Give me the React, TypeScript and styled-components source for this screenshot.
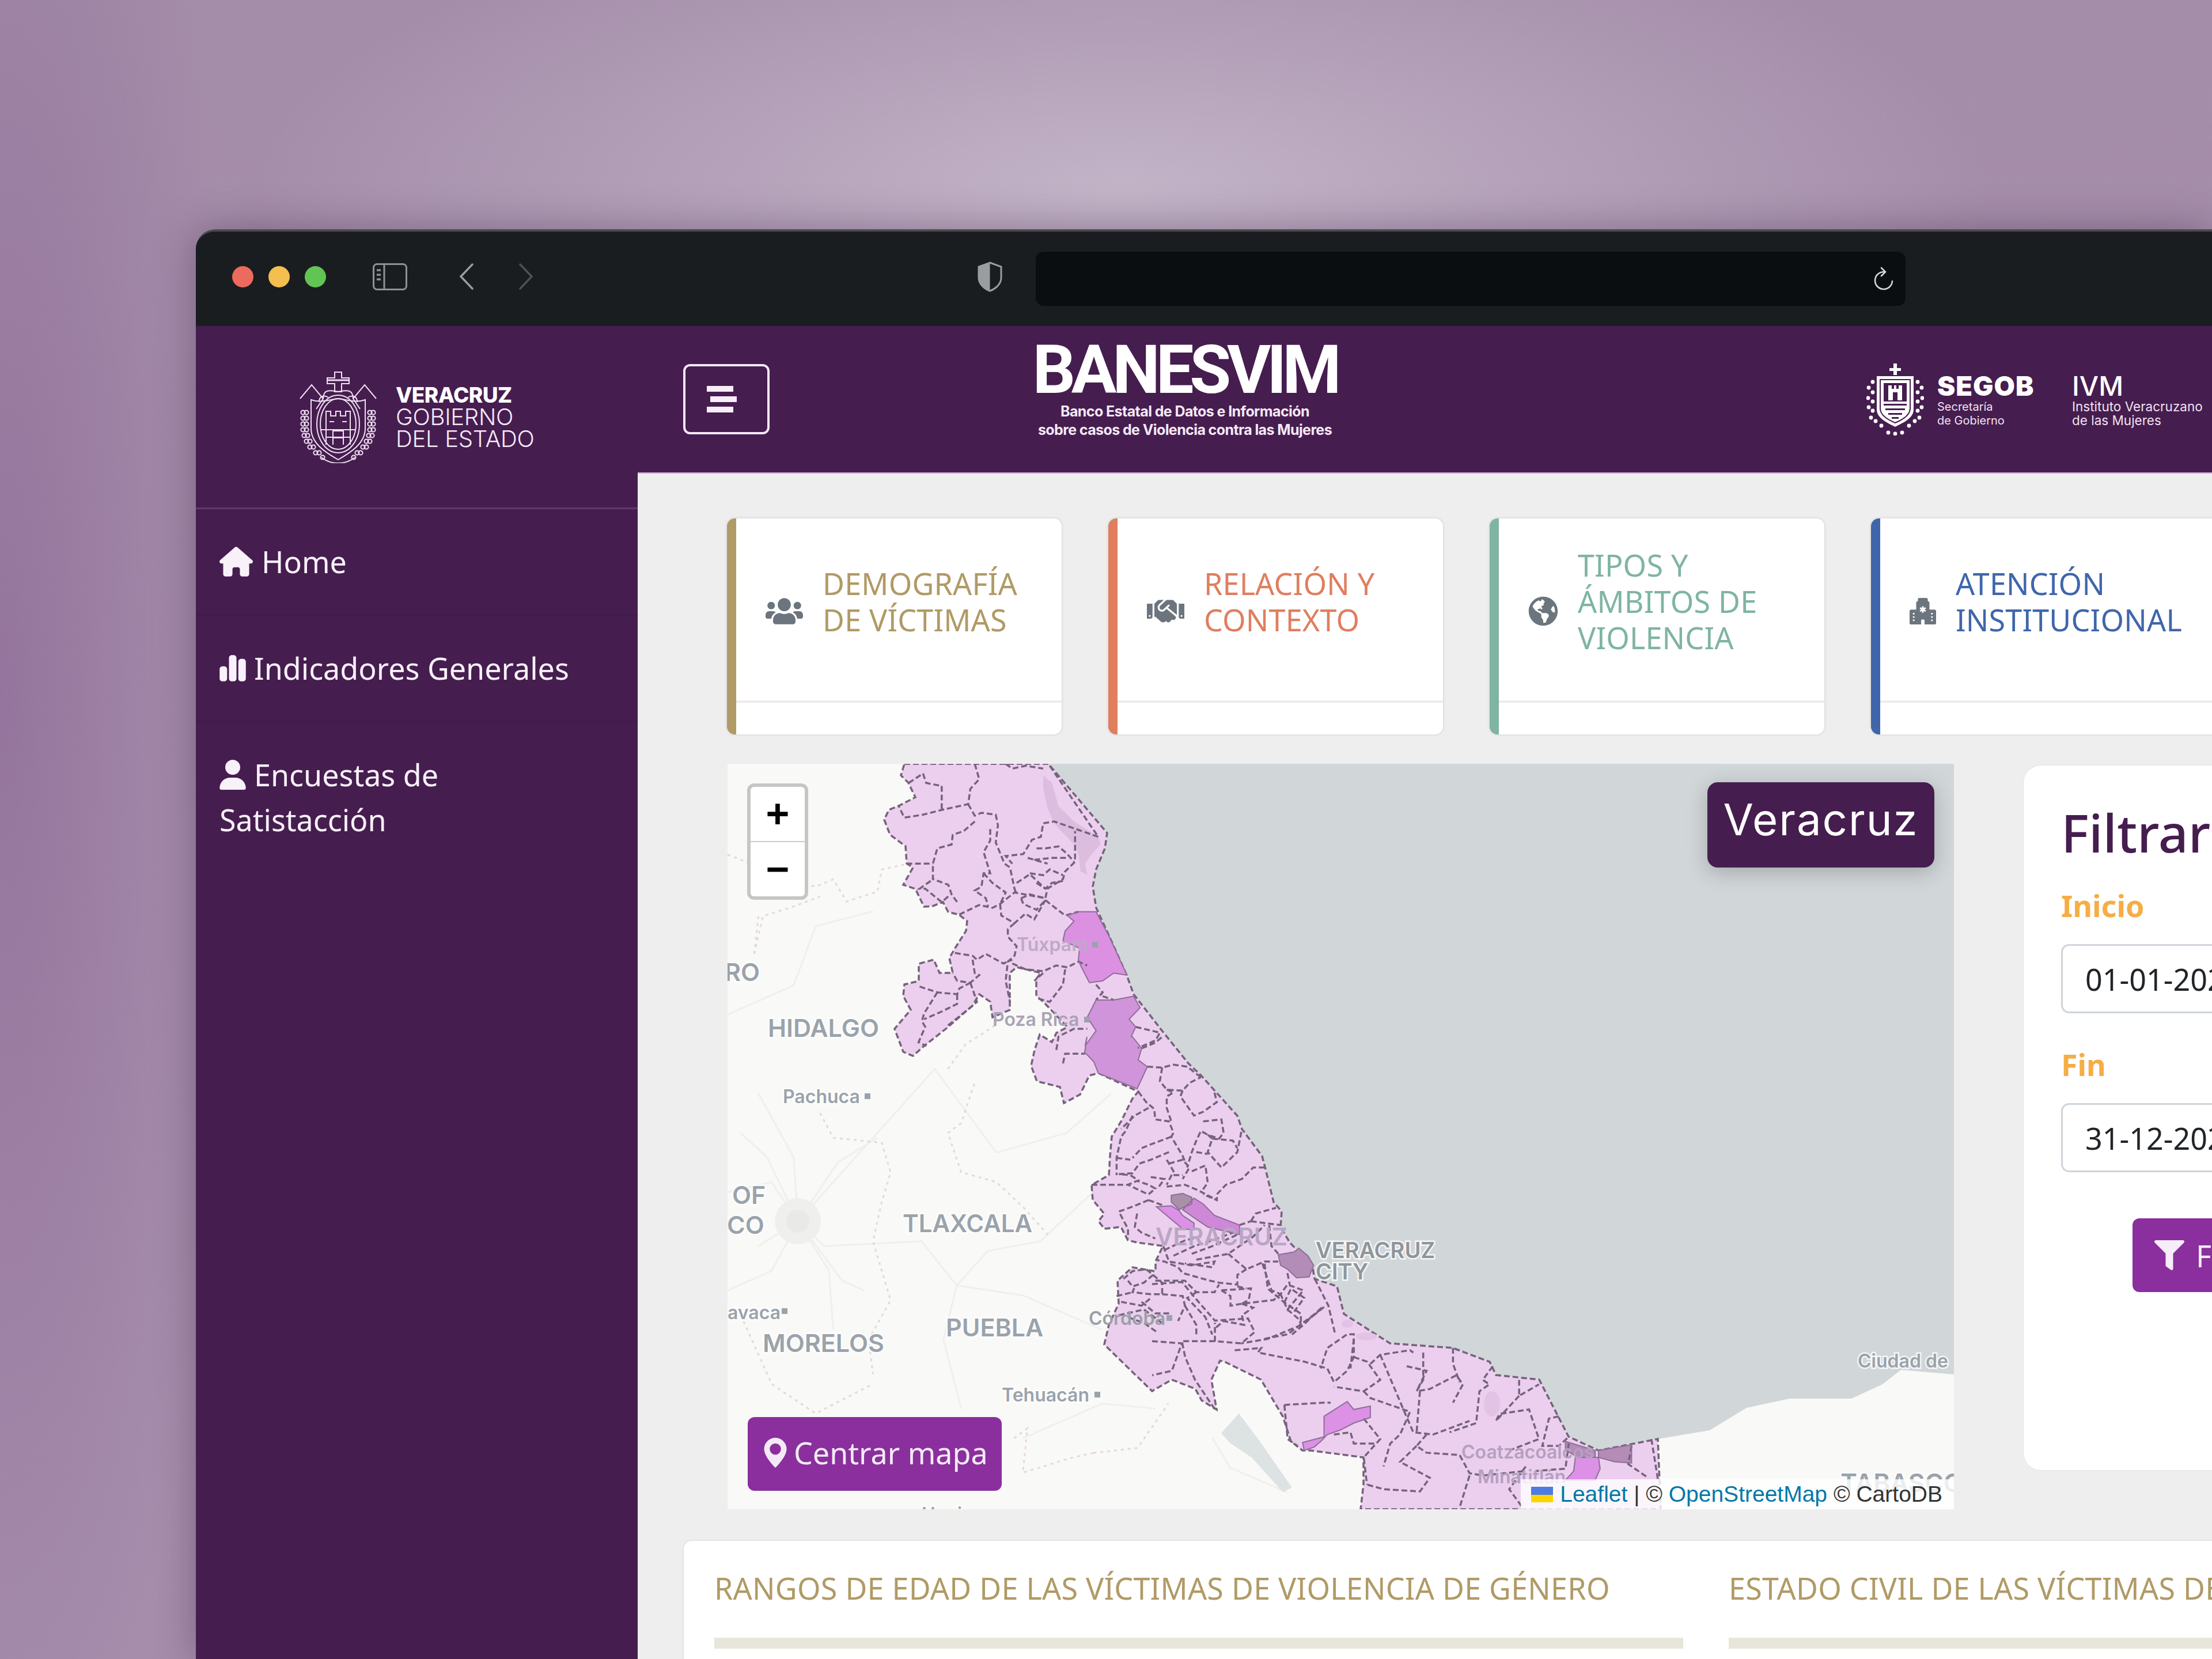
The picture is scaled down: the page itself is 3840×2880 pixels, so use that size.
import styled, { createGlobalStyle } from 'styled-components';
import { FaUsers, FaFilter, FaHandshake, FaGlobeAmericas } from 'react-icons/fa';
import { FaHouse, FaChartSimple, FaUser } from 'react-icons/fa6';
import { BsGeoAltFill, BsHospitalFill } from 'react-icons/bs';

const GlobalStyle = createGlobalStyle`
  html, body {
    margin: 0;
    width: 3840px;
    height: 2880px;
    overflow: hidden;
    font-family: "Noto Sans", "Open Sans", sans-serif;
  }
`;

const PURPLE = '#461d4f';
const ACCENT = '#8a2f9d';

const Backdrop = styled.div`
  width: 3840px;
  height: 2880px;
  overflow: hidden;
  padding: 398px 0 0 340px;
  box-sizing: border-box;
  background:
    radial-gradient(ellipse 1500px 520px at 1950px 330px, #c3b4c8 0%, rgba(190, 173, 197, 0) 100%),
    radial-gradient(ellipse 420px 2000px at 0px 1200px, #94749c 0%, rgba(148, 116, 156, 0) 100%),
    linear-gradient(180deg, #a48da9 0%, #a88fae 50%, #a68dac 100%);
`;

const Win = styled.div`
  width: 3500px;
  height: 2482px;
  border-radius: 34px 0 0 0;
  overflow: hidden;
  border-top: 4px solid #4d4a50;
  box-shadow: 0 0 70px rgba(40, 20, 50, 0.35);
  background: ${PURPLE};
`;

const TitleBar = styled.div`
  height: 164px;
  background: #1a1d20;
  display: flex;
  align-items: center;
  padding-left: 63px;
`;

const Light = styled.span<{ $c: string }>`
  width: 37px;
  height: 37px;
  border-radius: 50%;
  margin: 0 26px 8px 0;
  background: ${(p) => p.$c};
`;

const ToolIcon = styled.svg<{ $ml: number }>`
  margin: 0 0 8px ${(p) => p.$ml}px;
  flex: none;
`;

const UrlBar = styled.div`
  margin-left: 57px;
  width: 1510px;
  height: 94px;
  background: #0b0e10;
  border-radius: 14px;
  display: flex;
  align-items: center;
  justify-content: flex-end;
  padding-right: 20px;
  box-sizing: border-box;
`;

const Body = styled.div`
  display: flex;
`;

const Sidebar = styled.aside`
  width: 767px;
  flex: none;
`;

const Brand = styled.div`
  height: 318px;
  box-sizing: border-box;
  border-bottom: 3px solid #5f3a6b;
  display: flex;
  align-items: center;
  padding-left: 178px;
  gap: 31px;
  color: #f4e9f6;
`;

const BrandText = styled.div`
  font-family: Inter, "Liberation Sans", sans-serif;
  font-size: 40px;
  line-height: 38px;
  font-weight: 300;
  letter-spacing: -0.3px;
  b {
    display: block;
    font-size: 37px;
    font-weight: 800;
    letter-spacing: -0.6px;
    color: #fff;
  }
`;

const NavItem = styled.a`
  display: block;
  padding: 52px 41px;
  font-size: 52px;
  line-height: 78px;
  color: #f8f1fa;
  border-bottom: 3px solid #42194b;
  &:last-child {
    border-bottom: 0;
  }
`;

const IconSlot = styled.span<{ $w: number; $h?: number; $mr?: number }>`
  display: inline-block;
  width: ${(p) => p.$w}px;
  height: ${(p) => p.$h ?? 52}px;
  margin-right: ${(p) => p.$mr ?? 15}px;
  vertical-align: -6px;
  flex: none;
  svg {
    display: block;
    width: 100%;
    height: 100%;
  }
`;

const Column = styled.div`
  flex: 1;
  min-width: 0;
`;

const Header = styled.header`
  height: 256px;
  box-sizing: border-box;
  border-bottom: 2px solid #c7a6cc;
  display: flex;
  align-items: center;
  padding-left: 79px;
  color: #fff;
`;

const MenuButton = styled.button`
  width: 150px;
  height: 122px;
  background: transparent;
  border: 4px solid #f5e9f7;
  border-radius: 12px;
  display: flex;
  flex-direction: column;
  align-items: flex-start;
  justify-content: center;
  gap: 8px;
  padding: 0 0 0 37px;
  flex: none;
`;

const MenuBar = styled.span<{ $shift?: boolean }>`
  display: block;
  width: 46px;
  height: 10px;
  background: #f7eefa;
  margin-left: ${(p) => (p.$shift ? 6 : 0)}px;
`;

const Banner = styled.div`
  margin-left: 455px;
  width: 532px;
  flex: none;
  text-align: center;
  transform: translateY(-18px);
`;

const BannerTitle = styled.div`
  font-family: Roboto, "Liberation Sans", sans-serif;
  font-weight: 700;
  font-size: 117px;
  line-height: 108px;
  letter-spacing: -7.2px;
  white-space: nowrap;
`;

const BannerSub = styled.div`
  font-family: Inter, sans-serif;
  font-weight: 700;
  font-size: 25px;
  line-height: 32px;
  margin-top: 2px;
  letter-spacing: -0.6px;
  white-space: nowrap;
  color: #f5eaf7;
`;

const SegobGroup = styled.div`
  margin-left: 917px;
  display: flex;
  align-items: center;
  flex: none;
`;

const LogoText = styled.div<{ $ml: number; $w: number; $small: number; $heavy?: boolean }>`
  margin-left: ${(p) => p.$ml}px;
  width: ${(p) => p.$w}px;
  font-family: Inter, sans-serif;
  font-size: ${(p) => p.$small}px;
  line-height: 24px;
  font-weight: 400;
  color: #efe3f2;
  white-space: nowrap;
  b {
    display: block;
    font-size: 47px;
    line-height: 50px;
    margin-bottom: -1px;
    color: #fff;
    font-weight: ${(p) => (p.$heavy ? 900 : 500)};
    letter-spacing: ${(p) => (p.$heavy ? '1px' : '0')};
  }
`;

const Main = styled.main`
  background: #eee;
  height: 2100px;
  overflow: hidden;
`;

const CardRow = styled.div`
  display: flex;
  gap: 81px;
  padding: 78px 0 0 155px;
`;

const Card = styled.div<{ $c: string }>`
  width: 581px;
  height: 375px;
  flex: none;
  box-sizing: border-box;
  background: #fff;
  border-left: 16px solid ${(p) => p.$c};
  border-radius: 14px;
  box-shadow: 0 0 5px rgba(0, 0, 0, 0.14);
  color: ${(p) => p.$c};
  display: flex;
  flex-direction: column;
  &:last-child {
    width: 620px;
  }
`;

const CardBody = styled.div`
  flex: 1;
  display: flex;
  align-items: center;
  padding: 0 0 29px 51px;
`;

const CardIcon = styled(IconSlot)`
  color: #6c757d;
  margin-top: 34px;
  margin-right: 34px;
`;

const CardTitle = styled.div`
  font-size: 52px;
  line-height: 63px;
  font-weight: 400;
  letter-spacing: 0.2px;
`;

const CardFoot = styled.div`
  height: 55px;
  border-top: 4px solid #eeece9;
`;

const MapRow = styled.div`
  display: flex;
  gap: 121px;
  align-items: flex-start;
  padding: 51px 0 0 156px;
`;

const MapBox = styled.div`
  position: relative;
  width: 2129px;
  height: 1294px;
  flex: none;
  overflow: hidden;
  background: #f9f9f7;
`;

const MapSvg = styled.svg`
  display: block;
  width: 100%;
  height: 100%;
`;

const MapLabel = styled.text<{ $size: number; $c: string; $halo?: boolean }>`
  font-family: Inter, "Liberation Sans", sans-serif;
  font-weight: 600;
  font-size: ${(p) => p.$size}px;
  fill: ${(p) => p.$c};
  stroke: ${(p) => (p.$halo ? 'rgba(255,255,255,0.8)' : 'none')};
  stroke-width: 5px;
  paint-order: stroke;
`;

const ZoomControl = styled.div`
  position: absolute;
  left: 34px;
  top: 34px;
  width: 106px;
  height: 202px;
  box-sizing: border-box;
  border: 6px solid #c6c6c6;
  border-radius: 12px;
  background: #fff;
  display: flex;
  flex-direction: column;
`;

const ZoomBtn = styled.span`
  flex: 1;
  display: flex;
  align-items: center;
  justify-content: center;
  font-family: "Liberation Sans", sans-serif;
  font-weight: 700;
  font-size: 70px;
  line-height: 1;
  color: #000;
  & + & {
    border-top: 2px solid #ccc;
  }
`;

const StateTag = styled.div`
  position: absolute;
  right: 34px;
  top: 32px;
  width: 394px;
  height: 148px;
  box-sizing: border-box;
  padding-bottom: 20px;
  background: ${PURPLE};
  color: #fff;
  border-radius: 18px;
  box-shadow: 0 8px 36px rgba(0, 0, 0, 0.22);
  display: flex;
  align-items: center;
  justify-content: center;
  font-family: Inter, sans-serif;
  font-size: 76px;
  letter-spacing: 2px;
  font-weight: 400;
`;

const CenterBtn = styled.button`
  position: absolute;
  left: 35px;
  bottom: 32px;
  width: 441px;
  height: 128px;
  box-sizing: border-box;
  border: 0;
  padding: 0 0 5px 22px;
  background: ${ACCENT};
  color: #f4eaf6;
  border-radius: 12px;
  font-family: "Noto Sans", sans-serif;
  font-size: 52px;
  display: flex;
  align-items: center;
  white-space: nowrap;
`;

const Attribution = styled.div`
  position: absolute;
  right: 0;
  bottom: 0;
  height: 52px;
  box-sizing: border-box;
  padding: 0 20px 0 18px;
  background: rgba(255, 255, 255, 0.8);
  font-family: "Liberation Sans", Arial, sans-serif;
  font-size: 39px;
  line-height: 52px;
  color: #333;
  white-space: nowrap;
  display: flex;
  align-items: center;
  a {
    color: #0078a8;
  }
  svg {
    margin-right: 12px;
  }
  span {
    white-space: pre;
  }
`;

const FilterCard = styled.section`
  margin-top: 3px;
  width: 900px;
  height: 1223px;
  flex: none;
  box-sizing: border-box;
  background: #fff;
  border-radius: 30px;
  box-shadow: 0 0 3px rgba(0, 0, 0, 0.08);
  padding: 62px 0 0 65px;
`;

const FilterTitle = styled.h2`
  margin: 0;
  font-size: 91px;
  line-height: 109px;
  font-weight: 500;
  color: ${PURPLE};
`;

const FieldLabel = styled.label<{ $mt: number }>`
  display: block;
  margin-top: ${(p) => p.$mt}px;
  font-size: 52px;
  line-height: 78px;
  font-weight: 700;
  color: #f6ad45;
`;

const DateInput = styled.div`
  margin-top: 28px;
  width: 800px;
  height: 120px;
  box-sizing: border-box;
  border: 3px solid #ced4da;
  border-radius: 14px;
  padding-left: 39px;
  display: flex;
  align-items: center;
  font-size: 52px;
  color: #212529;
`;

const FilterBtn = styled.button`
  margin: 80px 0 0 124px;
  width: 400px;
  height: 128px;
  border: 0;
  border-radius: 12px;
  padding: 0 0 0 38px;
  background: ${ACCENT};
  color: #f6edf8;
  font-family: "Noto Sans", sans-serif;
  font-size: 52px;
  display: flex;
  align-items: center;
`;

const ChartsCard = styled.section`
  margin: 55px 0 0 80px;
  height: 400px;
  background: #fff;
  border-radius: 14px 0 0 0;
  box-shadow: 0 0 4px rgba(0, 0, 0, 0.12);
  padding: 50px 0 0 53px;
  display: flex;
  gap: 79px;
`;

const ChartCol = styled.div`
  width: 1682px;
  flex: none;
`;

const ChartTitle = styled.div`
  font-size: 52px;
  line-height: 63px;
  letter-spacing: 0.25px;
  color: #b09a66;
  white-space: nowrap;
`;

const ChartBar = styled.div`
  margin-top: 55px;
  height: 19px;
  background: #e8e5da;
`;

type Pt = [number, number];

const fromZoom = (ox: number, oy: number, sx: number, sy: number) => (s: string): Pt[] =>
  s
    .trim()
    .split(/\s+/)
    .map((p) => {
      const [x, y] = p.split(',').map(Number);
      return [ox + x / sx, oy + y / sy] as Pt;
    });

// coordinates read off the zoomed crops of the reference
const A = fromZoom(1520, 1326, 2.613, 3);
const B = fromZoom(1800, 1800, 2.529, 3);
const C = fromZoom(2000, 2000, 1.742, 2.529);
const D = fromZoom(1240, 1300, 1.3067, 1.17);

const pts = (list: Pt[]) => list.map(([x, y]) => `${x.toFixed(1)},${y.toFixed(1)}`).join(' ');

const STATE =
  '1570,1326 1820,1326 1922,1446 1918,1473 1903,1509 1897,1539 1903,1576 1926,1626 1956,1693 1968,1726 2017,1789 2063,1846 2085,1867 2148,1937 2156,1960 2191,2007 2197,2030 2211,2087 2225,2103 2223,2130 2239,2157 2278,2197 2282,2220 2321,2233 2333,2281 2413,2332 2522,2340 2586,2364 2597,2387 2672,2395 2723,2494 2775,2518 2878,2498 2883,2620 2362,2620 2367,2577 2367,2530 2275,2518 2261,2518 2241,2502 2227,2459 2189,2395 2126,2364 2118,2362 2103,2395 2112,2447 2086,2431 2075,2411 2034,2395 2000,2415 1917,2334 1925,2300 1942,2263 1940,2223 1966,2200 2006,2207 2006,2190 2019,2163 1974,2157 1958,2153 1946,2130 1917,2133 1907,2120 1917,2107 1897,2083 1895,2057 1925,2040 1927,2007 1930,1973 1946,1947 1966,1907 1976,1895 1907,1863 1891,1867 1875,1900 1847,1915 1840,1887 1800,1877 1790,1850 1796,1823 1805,1796 1826,1809 1834,1793 1853,1783 1811,1739 1799,1729 1799,1699 1807,1689 1765,1679 1753,1689 1753,1753 1723,1766 1719,1739 1700,1726 1688,1746 1642,1786 1604,1816 1585,1833 1568,1826 1553,1786 1581,1753 1568,1729 1570,1709 1595,1703 1595,1673 1621,1666 1631,1689 1654,1689 1648,1663 1658,1646 1677,1616 1679,1599 1665,1588 1646,1583 1637,1566 1619,1573 1604,1574 1589,1543 1568,1536 1585,1506 1574,1499 1572,1469 1545,1449 1535,1423 1543,1406 1562,1398 1589,1384 1577,1359 1564,1346';

const SEA =
  '1820,1326 3392,1326 3392,2386 3300,2378 3268,2403 3214,2428 3107,2428 3032,2444 2968,2483 2878,2498 2775,2518 2723,2494 2672,2395 2597,2387 2586,2364 2522,2340 2413,2332 2333,2281 2321,2233 2282,2220 2278,2197 2239,2157 2223,2130 2225,2103 2211,2087 2197,2030 2191,2007 2156,1960 2148,1937 2085,1867 2063,1846 2017,1789 1968,1726 1956,1693 1926,1626 1903,1576 1897,1539 1903,1509 1918,1473 1922,1446';

const BORDERS: Pt[][] = [
  ...[
    '450,0 470,80 430,130 420,210 300,240 215,265 130,280 105,220',
    '150,100 215,50 230,100 300,115 300,240',
    '420,210 450,270 480,255 545,265 555,320 545,410 585,520 610,540 630,650 640,680',
    '450,300 400,350 350,370 345,420 280,440 260,520 260,600 330,630 345,680 370,720',
    '140,520 240,520 260,520',
    '250,610 200,650 225,650 300,720 340,680',
    '380,785 470,735 530,750 565,730 630,670 770,700',
    '520,340 520,400 490,460 520,570 490,570 480,640 450,660 500,700 510,740',
    '490,570 530,620 590,670 565,730',
    '565,730 570,790 630,830 680,780 720,810 770,710',
    '630,830 600,860 600,900 640,950 630,1000 600,1030 590,1130 610,1240',
    '770,710 860,790 920,770',
    '660,700 700,680 770,700 780,650 850,600 860,560 905,510 905,350',
    '1010,380 810,300 760,310 750,380 710,395 670,470 590,480 620,520',
    '790,10 1010,380',
    '730,440 770,440 830,430 870,470 900,510',
    '690,490 780,520',
    '720,500 800,490 870,490',
    '700,570 760,580 790,550 850,580',
    '730,620 770,650 800,620 850,610',
    '640,620 700,575 770,650',
    '660,700 670,730 730,760 770,710',
    '620,1040 680,1070 760,1080 820,1050 870,1060 920,1030 960,1050',
    '360,985 440,1000 460,1020 500,990 580,1040 620,1020',
    '440,1020 450,1090 470,1100 430,1140 370,1130 350,1090',
    '430,1140 460,1240 440,1260 320,1370',
    '200,1160 280,1190 370,1200 380,1170 430,1140',
    '280,1190 220,1300 210,1340 225,1370 195,1450 230,1470',
    '370,1200 370,1250 300,1290 220,1330',
    '760,1090 720,1130',
    '860,1070 850,1150 790,1240 730,1220',
    '1000,1150 1030,1190 1000,1230',
    '1030,1210 1080,1230',
    '820,1490 830,1420 900,1380 960,1380',
    '850,1560 860,1510 950,1510',
    '590,0 620,25 680,10 760,25',
    '1180,1370 1290,1400 1270,1440 1190,1480',
  ].map(A),
  ...[
    '460,60 520,30 550,0',
    '485,155 550,160 600,145 660,155 720,210',
    '550,160 540,230 570,275 640,280 670,240 720,210',
    '640,280 630,310 690,410 730,390 790,340 780,290',
    '445,285 480,340 515,375 520,430 580,440 600,500 590,520 640,620 650,650',
    '570,275 600,290 570,310 570,370 590,440',
    '490,370 430,410 370,480',
    '420,410 390,490 370,520 350,630 350,720',
    '590,520 500,560 460,580 420,630',
    '350,630 410,640',
    '580,600 500,640 450,660 420,710 360,715 410,720 450,750',
    '730,440 810,430 820,500 800,530 750,510 720,490 700,540 680,600 660,680',
    '750,510 770,530 750,600 810,680 880,600 900,480',
    '770,530 860,540 880,580',
    '700,600 750,610',
    '1000,680 950,680 900,740 830,770 790,820 790,850 730,820',
    '240,770 330,770 400,770 440,750 490,770 520,790 490,820 470,810 400,770',
    '490,850 430,880 360,910 400,1000 400,1050',
    '490,850 560,880',
    '440,920 430,990 460,1020 520,1050',
    '570,640 600,700 570,770',
    '580,660 640,640 670,680 640,740',
    '600,720 640,720',
    '680,700 740,670 750,760 720,810',
    '570,780 650,770 710,800 790,850',
    '500,730 560,740 530,790',
    '940,960 960,920 1050,890',
    '940,960 1000,970 1070,980',
    '890,980 940,960',
    '1020,980 1030,1090 1060,1130',
    '560,1110 650,1060 720,1040',
    '600,1140 690,1090 770,1060 860,1020',
    '680,1130 770,1090 880,1030',
    '700,1160 840,1130 950,1040 1000,980',
    '555,1090 580,1170 680,1190 780,1170 770,1200 650,1180',
    '840,1130 920,1210 1000,1170 1060,1170',
    '920,1210 880,1240 880,1290 800,1280 760,1270 640,1230 620,1200 560,1170 520,1160',
    '990,1180 1030,1320 1070,1340 1100,1290 1170,1320 1100,1420 1070,1340',
    '1100,1230 1110,1290',
    '810,1320 940,1310 930,1370 900,1390 1040,1370 1070,1340',
    '810,1320 850,1350 850,1400 900,1390',
    '880,1300 920,1310',
    '520,1270 650,1270 700,1330 780,1330 800,1290',
    '700,1330 660,1360 740,1460 770,1550',
    '900,1390 950,1410 900,1450 910,1500 820,1480 780,1520',
    '1250,1410 1170,1500 1120,1550',
    '1100,1420 1150,1470 1160,1500',
    '1220,1260 1280,1400 1310,1550',
    '380,1260 420,1220 480,1210 510,1240 470,1280 420,1300 400,1270',
    '510,1240 550,1280 550,1340 500,1340 420,1330 430,1300',
    '350,1350 420,1330',
    '370,1380 460,1400 500,1360',
    '460,1380 520,1440 590,1440',
    '550,1340 640,1350 650,1400 620,1480',
    '400,1460 470,1490 530,1540',
    '360,1450 470,1420 560,1500',
    '650,1400 700,1500 700,1560',
  ].map(B),
  ...[
    '0,580 90,570 130,640 190,740 290,730 310,790 270,840 190,830 190,750',
    '340,490 350,600 400,660 450,710 450,760 350,820 270,840',
    '520,680 460,750',
    '400,660 420,600 460,640 430,700',
    '190,830 90,830 100,900 130,1000 190,1130',
    '0,830 90,840 60,960 0,980',
    '250,870 330,860 320,880 460,920 530,950 550,1010 590,960 610,900 610,800 590,800 530,860 510,950',
    '340,820 410,800 520,680',
    '610,820 600,950',
    '610,900 650,920 690,1000 640,1050 550,1030',
    '660,930 690,890 780,870 790,880',
    '820,880 820,1000 800,1050 840,1040 920,980 940,1020 910,1100',
    '910,860 910,930 930,1010',
    '1030,940 1000,1000 1020,1020 990,1050 980,1190 900,1230',
    '690,890 760,1130 790,1230 850,1240 960,1180',
    '770,940 830,960 800,1050',
    '810,1050 800,1230',
    '640,1050 660,1080 780,1140 750,1240 720,1280 700,1380',
    '1110,1000 1110,1070 1170,1020',
    '1110,1070 1040,1180 1050,1150 1140,1130 1170,1260 1080,1310',
    '400,1110 520,1100 540,1100',
    '400,1110 410,1260 440,1290',
    '550,1240 600,1230 610,1280 680,1280',
    '640,1170 690,1260 640,1340 650,1460',
    '830,1240 800,1290 830,1320 930,1330 960,1410 1000,1420 1130,1400',
    '800,1290 750,1360 840,1430 810,1490 700,1480 650,1460',
    '1230,1160 1200,1170 1180,1290 1230,1290 1260,1250',
    '1260,1280 1250,1390 1160,1400',
    '960,1420 930,1560',
    '1130,1380 1080,1480 1120,1560',
    '1510,1260 1530,1440',
    '1450,1290 1440,1370 1500,1430',
  ].map(C),
];

const HIGHLIGHTS: { fill: string; points: Pt[] }[] = [
  {
    fill: '#dc90e2',
    points: A('870,790 920,770 1000,770 1060,900 1140,1100 1080,1090 1030,1130 970,1140 930,1050 920,1020 925,960 850,920 860,870 900,820'),
  },
  {
    fill: '#cf94d9',
    points: [
      ...A('1000,1230 1080,1230 1170,1210 1200,1270 1150,1330 1180,1370 1160,1420'),
      ...B('420,0 460,60 445,120 485,155 460,220 440,270 270,190 250,130 210,80 220,0'),
      ...A('950,1470 1000,1390 960,1320'),
    ],
  },
  { fill: '#a890a8', points: B('590,825 640,815 680,835 680,870 640,890 625,900 590,860') },
  { fill: '#cf88d8', points: B('640,900 690,840 730,870 780,930 890,980 890,1030 820,1010 750,990 700,950') },
  { fill: '#dc90e6', points: B('525,885 590,880 625,905 640,930 690,970 690,1005 640,1000 590,950') },
  { fill: '#b48cb8', points: B('1060,1135 1130,1120 1150,1100 1190,1140 1215,1190 1195,1250 1140,1255 1100,1210 1070,1190') },
  {
    fill: '#dc90e6',
    points: C('520,1160 590,1095 610,1130 660,1115 660,1165 610,1190 570,1220 530,1240 510,1270 490,1295 460,1310 455,1275 520,1250'),
  },
  { fill: '#b58bb8', points: C('1350,1310 1450,1285 1450,1365 1400,1360 1350,1340') },
  { fill: '#b58bb8', points: C('1250,1270 1340,1310 1340,1340 1290,1340 1250,1310') },
  { fill: '#dc90e6', points: C('1280,1340 1350,1340 1355,1390 1340,1440 1250,1440 1275,1400') },
];

const ROADS = [
  '100,700 180,830 190,960 290,1080 340,1100',
  '190,960 350,800 500,650 640,820',
  '30,900 130,880 190,960 250,1010 470,1000 550,1090 700,1110 880,1180',
  '190,960 130,1060 30,1100',
  '550,1090 520,1200 560,1340',
  '640,820 800,780 900,700',
  '550,1090 620,1020 740,1000 860,900',
  '30,540 180,480 230,360 360,330',
  '700,1400 880,1330 1000,1340',
  '1130,1400 1170,1460 1300,1510',
  '190,960 120,830 60,780',
  '190,960 280,840 370,790',
  '190,960 100,1010',
  '190,960 260,1060 270,1180',
].map(D);

const STATE_LINES = [
  '30,215 60,225 140,260 230,280 270,265 300,310 370,290 380,245 430,235',
  '100,340 90,420 110,340 180,320 240,300',
  '240,740 270,790 380,800 400,860 380,920 360,1000 400,1120 350,1200 360,1270',
  '530,650 570,600 640,560',
  '590,680 560,760 530,780 560,860 640,880 700,930 760,990',
  '860,1430 960,1420 1030,1330',
  '680,1400 710,1380 700,1470 810,1440 860,1430',
  '60,1150 130,1290 230,1350 360,1290',
].map(D);

const LAND_LABELS: { t: string; x: number; y: number; s: number }[] = [
  { t: 'HIDALGO', x: 1333, y: 1800, s: 43 },
  { t: 'Pachuca', x: 1359, y: 1915, s: 32 },
  { t: 'OF', x: 1271, y: 2090, s: 43 },
  { t: 'CO', x: 1262, y: 2142, s: 43 },
  { t: 'RO', x: 1258, y: 1703, s: 43 },
  { t: 'TLAXCALA', x: 1567, y: 2139, s: 42 },
  { t: 'avaca', x: 1263, y: 2290, s: 32 },
  { t: 'MORELOS', x: 1324, y: 2347, s: 43 },
  { t: 'PUEBLA', x: 1642, y: 2320, s: 43 },
  { t: 'Tehuacán', x: 1739, y: 2433, s: 32 },
  { t: 'Huajuapan', x: 1600, y: 2640, s: 32 },
  { t: 'Ciudad de', x: 3225, y: 2374, s: 32 },
  { t: 'TABASCO', x: 3195, y: 2590, s: 44 },
];

const STATE_LABELS: { t: string; x: number; y: number; s: number; c: string }[] = [
  { t: 'Túxpam', x: 1765, y: 1651, s: 32, c: '#bfa9c8' },
  { t: 'Poza Rica', x: 1723, y: 1781, s: 32, c: '#a9a3b6' },
  { t: 'Córdoba', x: 1890, y: 2300, s: 32, c: '#9aa0a8' },
  { t: 'VERACRUZ', x: 2006, y: 2162, s: 42, c: '#b9a6c5' },
  { t: 'Coatzacoalcos', x: 2537, y: 2532, s: 32, c: '#b5a0c2' },
  { t: 'Minatitlán', x: 2565, y: 2575, s: 32, c: '#b5a0c2' },
];

const DOTS: Pt[] = [
  [1506, 1903],
  [1362, 2276],
  [1905, 2421],
  [1901, 1640],
  [1887, 1770],
  [2030, 2288],
];

const PATCHES: [number, number, number, number][] = [
  [2339, 2298, 10, 7],
  [2372, 2320, 18, 7],
  [2590, 2437, 14, 22],
];

const MapDrawing = () => (
  <MapSvg viewBox="1263 1326 2129 1294">
    <rect x={1263} y={1326} width={2129} height={1294} fill="#f9f9f7" />
    {ROADS.map((r, i) => (
      <polyline key={i} points={pts(r)} fill="none" stroke="#efefec" strokeWidth={3} />
    ))}
    {STATE_LINES.map((r, i) => (
      <polyline key={i} points={pts(r)} fill="none" stroke="#e6d8d8" strokeWidth={3} strokeDasharray="5 7" />
    ))}
    <circle cx={1385} cy={2120} r={40} fill="#efefed" />
    <circle cx={1385} cy={2120} r={20} fill="#e9e9e7" />
    <polygon points={pts(D('1150,1390 1190,1350 1240,1410 1310,1500 1290,1510 1220,1440 1170,1410'))} fill="#dde2e3" />
    <polygon points={SEA} fill="#d1d6d9" />
    {LAND_LABELS.map((l) => (
      <MapLabel key={l.t} x={l.x} y={l.y} $size={l.s} $c="#9aa3ab" $halo>
        {l.t}
      </MapLabel>
    ))}
    <polygon points={STATE} fill="#eccfef" stroke="#76627c" strokeWidth={3.5} strokeDasharray="10 5" />
    <polygon
      points={pts(A('760,60 800,100 830,220 900,300 1010,380 1020,420 980,470 950,520 960,580 930,560 920,470 900,420 850,360 810,310 780,230 760,130'))}
      fill="#dcbde0"
    />
    {PATCHES.map(([cx, cy, rx, ry]) => (
      <ellipse key={cx} cx={cx} cy={cy} rx={rx} ry={ry} fill="#e2c3e6" />
    ))}
    {HIGHLIGHTS.map((h, i) => (
      <polygon key={i} points={pts(h.points)} fill={h.fill} />
    ))}
    {BORDERS.map((b, i) => (
      <polyline key={i} points={pts(b)} fill="none" stroke="#76627c" strokeWidth={3.5} strokeDasharray="10 5" />
    ))}
    {HIGHLIGHTS.map((h, i) => (
      <polygon key={i} points={pts(h.points)} fill="none" stroke="#8d6f97" strokeWidth={2} />
    ))}
    {STATE_LABELS.map((l) => (
      <MapLabel key={l.t} x={l.x} y={l.y} $size={l.s} $c={l.c}>
        {l.t}
      </MapLabel>
    ))}
    {DOTS.map(([x, y]) => (
      <rect key={`${x}-${y}`} x={x - 5} y={y - 5} width={10} height={10} fill="#9aa3ab" />
    ))}
    <MapLabel x={2284} y={2184} $size={38} $c="#8f959b" $halo>
      VERACRUZ
    </MapLabel>
    <MapLabel x={2284} y={2221} $size={38} $c="#8f959b" $halo>
      CITY
    </MapLabel>
  </MapSvg>
);

const CREST_BEADS: Pt[] = [
  [8, 72], [14, 72], [8, 82], [14, 82], [8, 92], [14, 92], [8, 102], [14, 102], [10, 112], [16, 112],
  [14, 122], [20, 122], [20, 132], [26, 132], [30, 142], [36, 142], [42, 150],
  [130, 72], [124, 72], [130, 82], [124, 82], [130, 92], [124, 92], [130, 102], [124, 102], [128, 112], [122, 112],
  [124, 122], [118, 122], [118, 132], [112, 132], [108, 142], [102, 142], [96, 150],
];

const VeracruzCrest = () => (
  <svg width={138} height={160} viewBox="0 0 138 160" fill="none" stroke="#efe0f2" strokeWidth={2}>
    <path d="M63 2h12v10h13v10H75v14H63V22H50V12h13z" />
    <path d="M50 16h38" strokeWidth={3} />
    <path d="M3 48l20-24 20 24-12 18M135 48l-20-24-20 24 12 18" />
    <path d="M43 48c0-18 14-14 26-12 12-2 26-6 26 12" />
    <path d="M36 54c0-12 10-12 16-8M102 54c0-12-10-12-16-8" />
    <path d="M22 50v50c0 26 26 42 47 54 21-12 47-28 47-54V50c-16 6-31 0-47-2-16 2-31 8-47 2z" />
    <ellipse cx={69} cy={92} rx={31} ry={44} />
    <ellipse cx={69} cy={92} rx={37} ry={50} />
    <path d="M48 128V70h8v8h9v-8h8v8h9v-8h8v58" />
    <path d="M38 102h62M60 128v-24h18v24M54 88h8M76 88h8" />
    <path d="M48 115h42M60 116h18" />
    {CREST_BEADS.map(([x, y]) => (
      <circle key={`${x}-${y}`} cx={x} cy={y} r={3.6} />
    ))}
    <path d="M40 150c10 8 20 10 29 10 9 0 19-2 29-10" />
  </svg>
);

const SEGOB_DOTS: Pt[] = [
  [11, 32], [4, 42], [11, 50], [3, 60], [11, 66], [4, 76], [11, 82], [8, 94], [16, 100],
  [89, 32], [96, 42], [89, 50], [97, 60], [89, 66], [96, 76], [89, 82], [92, 94], [84, 100],
  [26, 108], [74, 108], [38, 120], [50, 122], [62, 120],
];

const SegobCrest = () => (
  <svg width={100} height={125} viewBox="0 0 100 125">
    <path d="M47 0h6v8h7v5h-7v7h-6v-7h-7V8h7z" fill="#fff" />
    {SEGOB_DOTS.map(([x, y]) => (
      <circle key={`${x}-${y}`} cx={x} cy={y} r={3.4} fill="#fff" />
    ))}
    <path d="M18 22h64v58c0 14-16 22-32 30-16-8-32-16-32-30z" fill="#fff" />
    <path d="M24 28h52v50c0 12-14 20-26 25-12-5-26-13-26-25z" fill="none" stroke={PURPLE} strokeWidth={2} />
    <path d="M30 34h40v32H30z" fill={PURPLE} />
    <path d="M38 38h6v6h4v-6h4v6h4v-6h6v26H38z" fill="#fff" />
    <path d="M46 50h8v14h-8z" fill={PURPLE} />
    <path d="M30 70h40v3H30zM33 78h34v3H33zM38 86h24v3H38zM44 93h12v3H44z" fill={PURPLE} />
  </svg>
);

const FLAG = (
  <svg width={38} height={27} viewBox="0 0 38 27">
    <rect width={38} height={14} fill="#4C7BE1" />
    <rect y={14} width={38} height={13} fill="#FFD500" />
  </svg>
);

const CARDS = [
  { c: '#b09a66', lines: ['DEMOGRAFÍA', 'DE VÍCTIMAS'], w: 65, icon: <FaUsers /> },
  { c: '#e07e5e', lines: ['RELACIÓN Y', 'CONTEXTO'], w: 65, icon: <FaHandshake /> },
  { c: '#7fb4a2', lines: ['TIPOS Y', 'ÁMBITOS DE', 'VIOLENCIA'], w: 52, icon: <FaGlobeAmericas /> },
  { c: '#3f66ab', lines: ['ATENCIÓN', 'INSTITUCIONAL'], w: 46, icon: <BsHospitalFill /> },
];

export default function App() {
  return (
    <Backdrop>
      <GlobalStyle />
      <Win>
        <TitleBar>
          <Light $c="#ec6a5e" />
          <Light $c="#f4bf4f" />
          <Light $c="#61c554" />
          <ToolIcon $ml={55} width={60} height={47} viewBox="0 0 60 47" fill="none" stroke="#8f9295" strokeWidth={3}>
            <rect x={1.5} y={1.5} width={57} height={44} rx={6} />
            <path d="M20 2v43" />
            <path d="M7 12h7M7 20h7M7 28h7" strokeWidth={3.5} />
          </ToolIcon>
          <ToolIcon $ml={90} width={26} height={46} viewBox="0 0 26 46" fill="none" stroke="#9a9da0" strokeWidth={3.5} strokeLinecap="round">
            <polyline points="23,2 3,23 23,44" />
          </ToolIcon>
          <ToolIcon $ml={77} width={26} height={46} viewBox="0 0 26 46" fill="none" stroke="#4e5154" strokeWidth={3.5} strokeLinecap="round">
            <polyline points="3,2 23,23 3,44" />
          </ToolIcon>
          <ToolIcon $ml={770} width={45} height={53} viewBox="0 0 45 53">
            <path d="M22.5 2L42 9v19c0 12-11 20-19.5 23C14 48 3 40 3 28V9z" fill="none" stroke="#9a9da0" strokeWidth={3} />
            <path d="M22.5 2L3 9v19c0 12 11 20 19.5 23z" fill="#9a9da0" />
          </ToolIcon>
          <UrlBar>
            <svg width={37} height={42} viewBox="0 0 37 42" fill="none" stroke="#d4d6d8" strokeWidth={2.6} strokeLinecap="round">
              <path d="M19 9a15 15 0 1 0 15 16" />
              <path d="M15 2l7 7-7 7" />
            </svg>
          </UrlBar>
        </TitleBar>
        <Body>
          <Sidebar>
            <Brand>
              <VeracruzCrest />
              <BrandText>
                <b>VERACRUZ</b>
                GOBIERNO
                <br />
                DEL ESTADO
              </BrandText>
            </Brand>
            <nav>
              <NavItem>
                <IconSlot $w={58}>
                  <FaHouse />
                </IconSlot>
                Home
              </NavItem>
              <NavItem>
                <IconSlot $w={46} $mr={14}>
                  <FaChartSimple />
                </IconSlot>
                Indicadores Generales
              </NavItem>
              <NavItem>
                <IconSlot $w={46} $mr={14}>
                  <FaUser />
                </IconSlot>
                Encuestas de
                <br />
                Satistacción
              </NavItem>
            </nav>
          </Sidebar>
          <Column>
            <Header>
              <MenuButton aria-label="menu">
                <MenuBar />
                <MenuBar $shift />
                <MenuBar />
              </MenuButton>
              <Banner>
                <BannerTitle>BANESVIM</BannerTitle>
                <BannerSub>
                  Banco Estatal de Datos e Información
                  <br />
                  sobre casos de Violencia contra las Mujeres
                </BannerSub>
              </Banner>
              <SegobGroup>
                <SegobCrest />
                <LogoText $ml={23} $w={234} $small={20} $heavy>
                  <b>SEGOB</b>
                  Secretaría
                  <br />
                  de Gobierno
                </LogoText>
                <LogoText $ml={0} $w={240} $small={22.5}>
                  <b>IVM</b>
                  Instituto Veracruzano
                  <br />
                  de las Mujeres
                </LogoText>
              </SegobGroup>
            </Header>
            <Main>
              <CardRow>
                {CARDS.map((card) => (
                  <Card key={card.lines[0]} $c={card.c}>
                    <CardBody>
                      <CardIcon $w={card.w}>{card.icon}</CardIcon>
                      <CardTitle>
                        {card.lines.map((l) => (
                          <div key={l}>{l}</div>
                        ))}
                      </CardTitle>
                    </CardBody>
                    <CardFoot />
                  </Card>
                ))}
              </CardRow>
              <MapRow>
                <MapBox>
                  <MapDrawing />
                  <ZoomControl>
                    <ZoomBtn>+</ZoomBtn>
                    <ZoomBtn>−</ZoomBtn>
                  </ZoomControl>
                  <StateTag>Veracruz</StateTag>
                  <CenterBtn>
                    <IconSlot $w={52} $mr={6}>
                      <BsGeoAltFill />
                    </IconSlot>
                    Centrar mapa
                  </CenterBtn>
                  <Attribution>
                    {FLAG}
                    <a>Leaflet</a>
                    <span> | © </span>
                    <a>OpenStreetMap</a>
                    <span> © CartoDB</span>
                  </Attribution>
                </MapBox>
                <FilterCard>
                  <FilterTitle>Filtrar</FilterTitle>
                  <FieldLabel $mt={33}>Inicio</FieldLabel>
                  <DateInput>01-01-2024</DateInput>
                  <FieldLabel $mt={50}>Fin</FieldLabel>
                  <DateInput>31-12-2024</DateInput>
                  <FilterBtn>
                    <IconSlot $w={52} $mr={20}>
                      <FaFilter />
                    </IconSlot>
                    Filtrar
                  </FilterBtn>
                </FilterCard>
              </MapRow>
              <ChartsCard>
                <ChartCol>
                  <ChartTitle>RANGOS DE EDAD DE LAS VÍCTIMAS DE VIOLENCIA DE GÉNERO</ChartTitle>
                  <ChartBar />
                </ChartCol>
                <ChartCol>
                  <ChartTitle>ESTADO CIVIL DE LAS VÍCTIMAS DE VIOLENCIA DE GÉNERO</ChartTitle>
                  <ChartBar />
                </ChartCol>
              </ChartsCard>
            </Main>
          </Column>
        </Body>
      </Win>
    </Backdrop>
  );
}
